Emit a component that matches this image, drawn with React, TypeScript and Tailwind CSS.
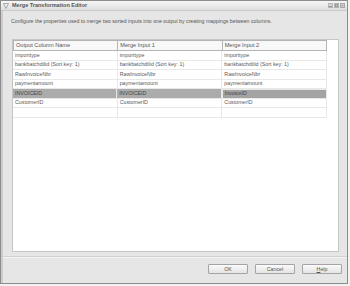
const columns = ['Output Column Name', 'Merge Input 1', 'Merge Input 2'];

const rows = [
  ['importtype', 'importtype', 'importtype'],
  ['bankbatchdtlid (Sort key: 1)', 'bankbatchdtlid (Sort key: 1)', 'bankbatchdtlid (Sort key: 1)'],
  ['RawInvoiceNbr', 'RawInvoiceNbr', 'RawInvoiceNbr'],
  ['paymentamount', 'paymentamount', 'paymentamount'],
  ['INVOICEID', 'INVOICEID', 'InvoiceID'],
  ['CustomerID', 'CustomerID', 'CustomerID'],
  ['', '', ''],
];

const SELECTED = 4;

export default function App() {
  return (
    <div className="w-[350px] h-[286px] bg-[#f2f2f2] text-[#555]" style={{ fontFamily: '"Liberation Sans", Arial, sans-serif' }}>
      <div className="w-[348px] h-[284px] border border-[#8c8c8c] bg-[#e6e6e6] flex flex-col">
        {/* ── Title bar ── */}
        <div className="h-[10px] flex items-center justify-between pl-[2px] pr-[2px] bg-gradient-to-b from-[#f6f6f6] to-[#dedede] border-b border-[#cacaca]">
          <div className="flex items-center gap-[3px]">
            <svg width="6" height="6" viewBox="0 0 6 6">
              <path d="M0.5 0.5 L5.5 0.5 L3 5.5 Z" fill="none" stroke="#999" strokeWidth="0.8" />
            </svg>
            <span className="text-[5.5px] font-bold text-[#555] leading-none">Merge Transformation Editor</span>
          </div>
          <div className="flex items-center gap-[1px]">
            <div className="w-[5px] h-[5px] bg-[#d8d8d8] border border-[#b4b4b4] flex items-end justify-center">
              <div className="w-[3px] h-[1px] bg-[#999] mb-[0.5px]" />
            </div>
            <div className="w-[5px] h-[5px] bg-[#d8d8d8] border border-[#b4b4b4] flex items-center justify-center">
              <div className="w-[3px] h-[3px] border border-[#999]" />
            </div>
            <div className="w-[5px] h-[5px] bg-[#d2d2d2] border border-[#a8a8a8] flex items-center justify-center text-[4px] leading-none text-[#777]">
              ×
            </div>
          </div>
        </div>

        {/* ── Body ── */}
        <div className="flex-1 flex flex-col border-l-[2px] border-[#cccccc]">
          <p className="text-[5.2px] leading-none mt-[8px] ml-[8px] text-[#555]">
            Configure the properties used to merge two sorted inputs into one output by creating mappings between columns.
          </p>

          <div className="mt-[15px] ml-[9px] mr-[8px] h-[213px] bg-white border border-[#c6c6c6]">
            <div className="w-[314px]">
              {/* Header */}
              <div className="flex h-[11px]">
                {columns.map((c) => (
                  <div key={c} className="flex-1 flex items-center px-[2px] bg-[#f8f8f8] border border-[#b4b4b4] -ml-px first:ml-0 text-[5.6px] leading-none text-[#555]">
                    {c}
                  </div>
                ))}
              </div>
              {/* Rows */}
              {rows.map((r, i) => (
                <div key={i} className={`flex h-[9.5px] ${i === SELECTED ? 'bg-[#ababab]' : ''}`}>
                  {r.map((cell, j) => (
                    <div
                      key={j}
                      className={`flex-1 flex items-center px-[2px] border-b border-r border-[#e8e8e8] text-[5.3px] leading-none ${i === SELECTED ? 'text-[#444] border-[#a0a0a0]' : 'text-[#5a5a5a]'} ${i === SELECTED && j === 2 ? 'bg-[#a3a3a3] border border-[#909090]' : ''}`}>
                      {cell}
                    </div>
                  ))}
                </div>
              ))}
            </div>
          </div>

          {/* Footer */}
          <div className="mt-[4px] border-t border-[#d0d0d0] shadow-[0_1px_0_#f6f6f6]" />
          <div className="flex justify-end gap-[7px] mt-[7px] mr-[5px]">
            {['OK', 'Cancel', 'Help'].map((b) => (
              <button
                key={b}
                className="w-[40px] h-[10px] rounded-[1px] border border-[#a4a4a4] bg-gradient-to-b from-[#fafafa] to-[#e4e4e4] text-[5.3px] leading-none text-[#555] flex items-center justify-center">
                {b === 'Help' ? <span><u>H</u>elp</span> : b}
              </button>
            ))}
          </div>
        </div>
      </div>
    </div>
  );
}
